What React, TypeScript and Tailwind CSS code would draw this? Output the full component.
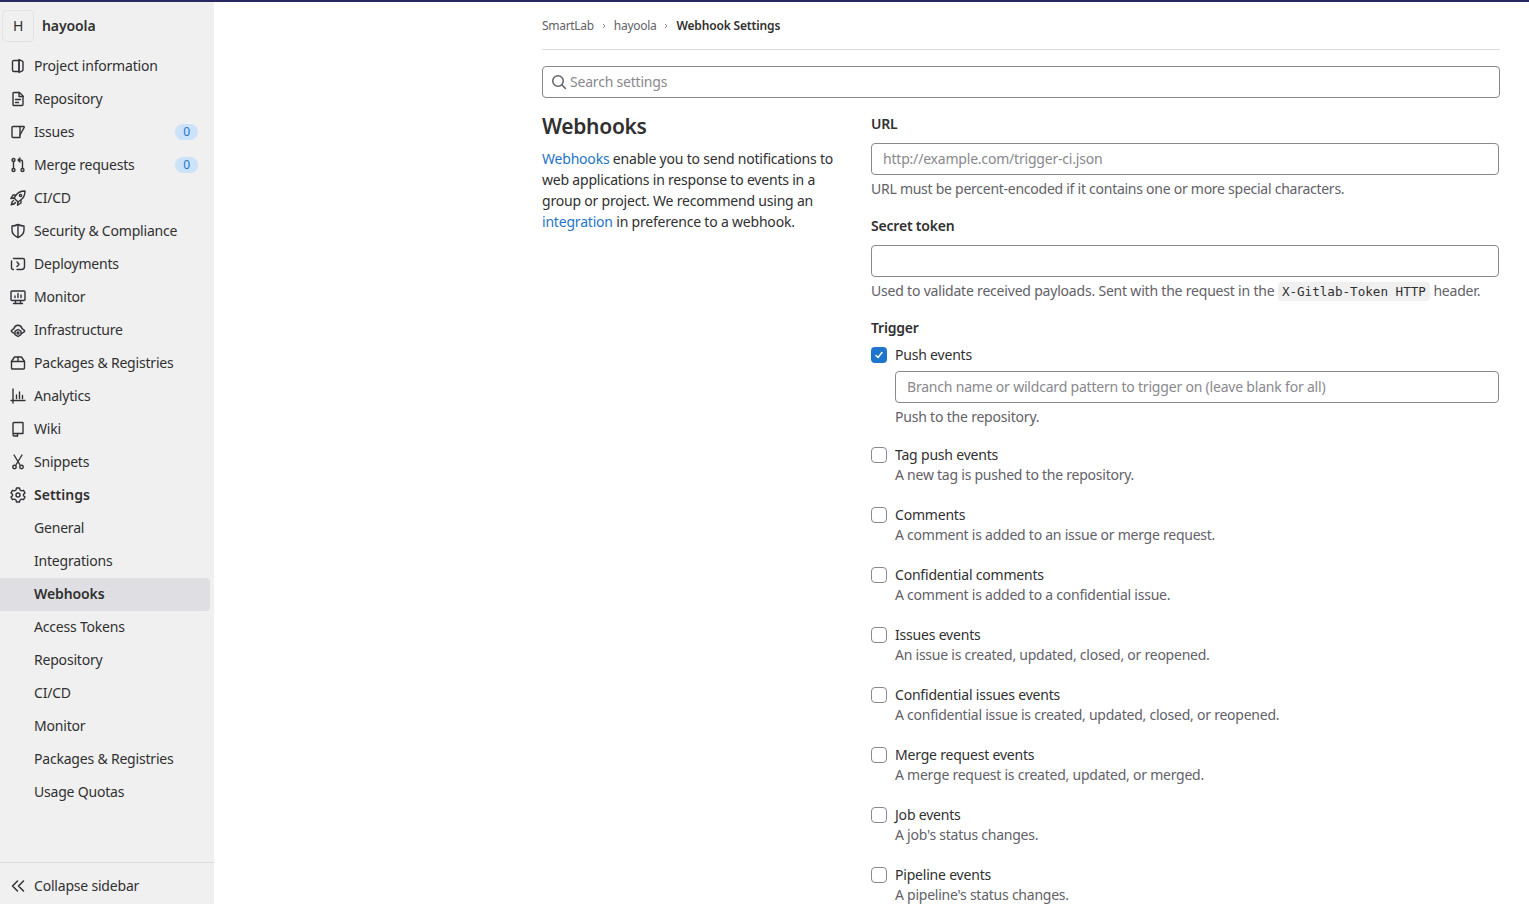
import React from 'react';

// 16px GitLab style outline icons
const Ico = ({ children }: { children: React.ReactNode }) => (
  <svg viewBox="0 0 16 16" fill="none" stroke="currentColor" strokeWidth="1.4" strokeLinecap="round" strokeLinejoin="round" className="w-4 h-4 shrink-0 text-[#333238]">
    {children}
  </svg>
);

const icons: Record<string, React.ReactNode> = {
  project: (
    <Ico>
      <path d="M9 2.500H4a1.500 1.500 0 0 0-1.500 1.500v8A1.500 1.500 0 0 0 4 13.500h5z" />
      <path d="M9 1.500l3.300 1.700a1.500 1.500 0 0 1 .7 1.200v7.200a1.500 1.500 0 0 1-.7 1.200L9 14.500z" />
    </Ico>
  ),
  repo: (
    <Ico>
      <path d="M3 2.500a1 1 0 0 1 1-1h5.500L13 5v8.500a1 1 0 0 1-1 1H4a1 1 0 0 1-1-1z" />
      <path d="M9 1.500V5.500h4M5.500 8.500h5M5.500 11.500h3" />
    </Ico>
  ),
  issues: (
    <Ico>
      <path d="M10 2.500H3a1 1 0 0 0-1 1v9a1 1 0 0 0 1 1h7z" />
      <path d="M10 2.500h3.800a.5.5 0 0 1 .4.800L10 11" />
    </Ico>
  ),
  merge: (
    <Ico>
      <circle cx="3.500" cy="3" r="1.500" />
      <circle cx="3.500" cy="13" r="1.500" />
      <circle cx="12.500" cy="13" r="1.500" />
      <path d="M3.500 4.500v7M12.500 11.500V5a2 2 0 0 0-2-2H8.500M10 1 8 3l2 2" />
    </Ico>
  ),
  cicd: (
    <Ico>
      <path d="M15 1c-4.500 0-7.500 1.500-9.500 5L4 8l4 4 2-1.500c3.500-2 5-5 5-9.500z" />
      <circle cx="10.500" cy="5.500" r="1.100" />
      <path d="M5.500 5H3L.8 8.500 4 8M11 10.500V13l-3.500 2.200L8 12M3.500 10.500C2 11.500 1.500 13 1.200 14.800 3 14.500 4.500 14 5.500 12.500" />
    </Ico>
  ),
  shield: (
    <Ico>
      <path d="M8 1.500c2 1 4 1.500 6 1.500v4c0 3.500-2.500 6-6 7.500C4.500 13 2 10.500 2 7V3c2 0 4-.500 6-1.500z" />
      <path d="M8 2v12" />
    </Ico>
  ),
  deploy: (
    <Ico>
      <path d="M3.500 2.500H13a1.500 1.500 0 0 1 1.500 1.500v6.500a3 3 0 0 1-3 3H7" />
      <path d="M3.500 13.500H3A1.500 1.500 0 0 1 1.500 12V5" />
      <path d="m7 6 2 2.250L7 10.500" />
    </Ico>
  ),
  monitor: (
    <Ico>
      <rect x="1" y="2" width="14" height="9.500" rx="1" />
      <path d="M5.500 11.500v3M10.500 11.500v3M3.500 14.500h9M5 8.500V7M8 8.500V4.500M11 8.500V6" />
    </Ico>
  ),
  infra: (
    <Ico>
      <path d="M4.300 11.500 1.600 9.600a.8.8 0 0 1 0-1.200L4 6.500a4.100 4.100 0 0 1 8 0l2.400 1.900a.8.8 0 0 1 0 1.200l-2.700 1.900" />
      <path d="M8 7.500l3 1.700v3.400l-3 1.900-3-1.900V9.200z" />
      <circle cx="8" cy="11" r="1" />
    </Ico>
  ),
  pkg: (
    <Ico>
      <path d="M4.500 2h7l3 4.500V13a1 1 0 0 1-1 1h-11a1 1 0 0 1-1-1V6.500z" />
      <path d="M1.500 6.500h13M8 2v4.500" />
    </Ico>
  ),
  analytics: (
    <Ico>
      <path d="M3 1v11.500M1 12.500h14M3 12.500V15M6.500 10.500V7M9.500 10.500V4M12.500 10.500V7.500" />
    </Ico>
  ),
  wiki: (
    <Ico>
      <path d="M3 12.500V2.500a1 1 0 0 1 1-1h8.500a.5.5 0 0 1 .5.500v10.500H4.250a1.250 1.250 0 0 0 0 2.500H7.500" />
      <path d="M7.500 12.500v2.500" />
    </Ico>
  ),
  snippets: (
    <Ico>
      <path d="M4 1 9.800 10.500M12 1 6.200 10.500" />
      <circle cx="4.500" cy="13" r="1.750" />
      <circle cx="11.500" cy="13" r="1.750" />
    </Ico>
  ),
  settings: (
    <Ico>
      <path d="m6.500 1h3l.5 2 1.500.900 2-.600 1.500 2.600-1.500 1.400v1.400l1.500 1.400-1.500 2.600-2-.600-1.500.900-.5 2h-3l-.5-2-1.500-.900-2 .600L1 10.100l1.500-1.400V7.300L1 5.900l1.500-2.600 2 .600L6 3z" />
      <circle cx="8" cy="8" r="2" />
    </Ico>
  ),
};

const mainNav = [
  { key: 'project', label: 'Project information' },
  { key: 'repo', label: 'Repository' },
  { key: 'issues', label: 'Issues', badge: '0' },
  { key: 'merge', label: 'Merge requests', badge: '0' },
  { key: 'cicd', label: 'CI/CD' },
  { key: 'shield', label: 'Security & Compliance' },
  { key: 'deploy', label: 'Deployments' },
  { key: 'monitor', label: 'Monitor' },
  { key: 'infra', label: 'Infrastructure' },
  { key: 'pkg', label: 'Packages & Registries' },
  { key: 'analytics', label: 'Analytics' },
  { key: 'wiki', label: 'Wiki' },
  { key: 'snippets', label: 'Snippets' },
];

const subNav = ['General', 'Integrations', 'Webhooks', 'Access Tokens', 'Repository', 'CI/CD', 'Monitor', 'Packages & Registries', 'Usage Quotas'];

const triggers = [
  { label: 'Tag push events', help: 'A new tag is pushed to the repository.' },
  { label: 'Comments', help: 'A comment is added to an issue or merge request.' },
  { label: 'Confidential comments', help: 'A comment is added to a confidential issue.' },
  { label: 'Issues events', help: 'An issue is created, updated, closed, or reopened.' },
  { label: 'Confidential issues events', help: 'A confidential issue is created, updated, closed, or reopened.' },
  { label: 'Merge request events', help: 'A merge request is created, updated, or merged.' },
  { label: 'Job events', help: "A job's status changes." },
  { label: 'Pipeline events', help: "A pipeline's status changes." },
];

const Sidebar = () => (
  <aside className="w-[214px] shrink-0 h-full bg-[#f0f0f0] flex flex-col">
    <div className="h-[47px] flex items-center pl-[2px] shrink-0">
      <div className="w-8 h-8 rounded border border-[#e3e3e3] flex items-center justify-center text-sm text-[#303030] bg-[#f0f0f0]">H</div>
      <span className="ml-2 text-sm font-semibold text-[#303030] tracking-[-0.1px]">hayoola</span>
    </div>
    <nav className="flex-1 pt-[0.5px]">
      {mainNav.map((item) => (
        <div key={item.label} className="h-[33px] flex items-center pl-[10px] pr-4 text-sm text-[#303030]">
          <span className="mr-2">{icons[item.key]}</span>
          <span>{item.label}</span>
          {item.badge && (
            <span className="ml-auto w-[23px] h-4 rounded-full bg-[#cbe2f9] text-[#1f75cb] text-xs flex items-center justify-center">{item.badge}</span>
          )}
        </div>
      ))}
      <div className="h-[33px] flex items-center pl-[10px] text-sm font-semibold text-[#303030] tracking-normal">
        <span className="mr-2">{icons.settings}</span>
        <span>Settings</span>
      </div>
      {subNav.map((label) => (
        <div
          key={label}
          className={
            label === 'Webhooks'
              ? 'h-[33px] w-[210px] flex items-center pl-[34px] text-sm font-semibold tracking-[-0.1px] text-[#303030] bg-[#dfdfe3] rounded-r'
              : 'h-[33px] flex items-center pl-[34px] text-sm text-[#303030]'
          }
        >
          {label}
        </div>
      ))}
    </nav>
    <div className="h-[42px] shrink-0 border-t border-[#dcdcde] flex items-center pt-1 pl-[10px] text-sm text-[#303030]">
      <svg viewBox="0 0 16 16" fill="none" stroke="currentColor" strokeWidth="1.5" strokeLinecap="round" strokeLinejoin="round" className="w-4 h-4 mr-2">
        <path d="M7.500 3 2.500 8l5 5M13.500 3l-5 5 5 5" />
      </svg>
      Collapse sidebar
    </div>
  </aside>
);

const TextInput = ({ placeholder, className }: { placeholder?: string; className?: string }) => (
  <input
    readOnly
    placeholder={placeholder}
    className={`h-8 w-full border border-[#89888d] rounded pl-[11px] pr-3 pb-[2px] text-sm bg-white outline-none placeholder:text-[#89888d] ${className ?? ''}`}
  />
);

const Check = ({ checked }: { checked?: boolean }) =>
  checked ? (
    <span className="w-4 h-4 rounded bg-[#1f75cb] flex items-center justify-center shrink-0">
      <svg viewBox="0 0 8 8" fill="none" stroke="white" strokeWidth="1.5" strokeLinecap="round" strokeLinejoin="round" className="w-2 h-2">
        <path d="M1 4.500 3 6.500 7 1.500" />
      </svg>
    </span>
  ) : (
    <span className="w-4 h-4 rounded border border-[#89888d] bg-white shrink-0" />
  );

export default function App() {
  return (
    <div className="font-['Noto_Sans',sans-serif] tracking-[-0.2px] h-[904px] overflow-hidden flex flex-col bg-white text-[#303030]">
      <div className="h-[2px] bg-[#292961] shrink-0" />
      <div className="flex-1 flex min-h-0">
        <Sidebar />
        <main className="flex-1 min-w-0 overflow-hidden pl-[328px] pr-[29px]">
          <div className="h-[48px] border-b border-[#dcdcde] flex items-center text-xs text-[#626168] tracking-[-0.3px]">
            <span>SmartLab</span>
            <svg viewBox="0 0 8 8" fill="none" stroke="#89888d" strokeWidth="1" className="w-2 h-2 mx-[6px]"><path d="m3 2 2 2-2 2" /></svg>
            <span>hayoola</span>
            <svg viewBox="0 0 8 8" fill="none" stroke="#89888d" strokeWidth="1" className="w-2 h-2 mx-[6px]"><path d="m3 2 2 2-2 2" /></svg>
            <span className="font-semibold text-[#303030] tracking-[-0.15px]">Webhook Settings</span>
          </div>
          <div className="mt-4 h-8 border border-[#89888d] rounded flex items-center pl-2 text-sm text-[#89888d]">
            <svg viewBox="0 0 16 16" fill="none" stroke="#626168" strokeWidth="1.5" strokeLinecap="round" className="w-4 h-4 mr-[3px]">
              <circle cx="7" cy="7" r="5.250" />
              <path d="m11 11 3.500 3.500" />
            </svg>
            Search settings
          </div>
          <div className="flex mt-4">
            <section className="w-[329px] shrink-0 pr-[30px]">
              <h2 className="text-[21px] leading-[24px] font-semibold tracking-[-0.3px] text-[#303030]">Webhooks</h2>
              <p className="mt-[10px] text-sm leading-[21px] text-[#303030]">
                <span className="text-[#1f75cb]">Webhooks</span> enable you to send notifications to web applications in response to events in a group or project. We recommend using an{' '}
                <span className="text-[#1f75cb]">integration</span> in preference to a webhook.
              </p>
            </section>
            <section className="flex-1 min-w-0 pr-[1px] text-sm">
              <div className="font-semibold leading-5">URL</div>
              <TextInput placeholder="http://example.com/trigger-ci.json" className="mt-[9px]" />
              <div className="mt-1 leading-5 text-[#626168] tracking-[-0.26px]">URL must be percent-encoded if it contains one or more special characters.</div>
              <div className="mt-[17px] font-semibold leading-5">Secret token</div>
              <TextInput className="mt-[9px]" />
              <div className="mt-1 leading-5 text-[#626168]">
                Used to validate received payloads. Sent with the request in the{' '}
                <code className="font-['DejaVu_Sans_Mono',monospace] tracking-normal text-[12.6px] bg-[#f0f0f0] text-[#303030] px-1 py-[2px] rounded">X-Gitlab-Token HTTP</code> header.
              </div>
              <div className="mt-4 font-semibold leading-5">Trigger</div>
              <div className="mt-[7px] flex items-center gap-2 leading-5">
                <Check checked />
                <span>Push events</span>
              </div>
              <div className="ml-6">
                <TextInput placeholder="Branch name or wildcard pattern to trigger on (leave blank for all)" className="mt-[6px]" />
                <div className="mt-1 leading-5 text-[#626168]">Push to the repository.</div>
              </div>
              {triggers.map((t, i) => (
                <div key={t.label} className={i === 0 ? 'mt-[18px]' : 'mt-5'}>
                  <div className="flex items-center gap-2 leading-5">
                    <Check />
                    <span>{t.label}</span>
                  </div>
                  <div className="ml-6 leading-5 text-[#626168] tracking-[-0.24px]">{t.help}</div>
                </div>
              ))}
            </section>
          </div>
        </main>
      </div>
    </div>
  );
}
